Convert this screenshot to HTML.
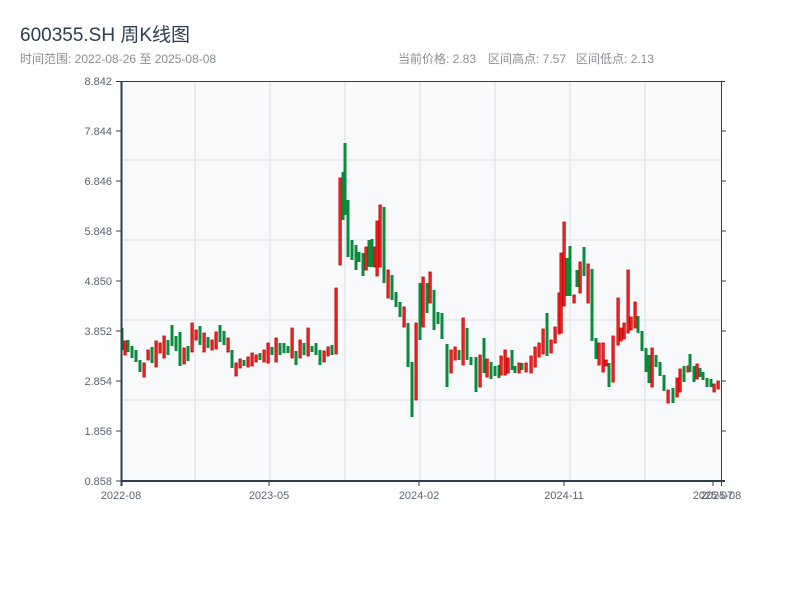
<!DOCTYPE html>
<html><head><meta charset="utf-8">
<style>
body{margin:0;background:#fff;width:800px;height:600px;overflow:hidden;font-family:"Liberation Sans","Noto Sans CJK SC",sans-serif;}
</style></head>
<body>
<svg id="s" width="800" height="600" xmlns="http://www.w3.org/2000/svg" style="position:absolute;left:0;top:0;font-family:'Liberation Sans','Noto Sans CJK SC',sans-serif">
<text x="20" y="41" font-size="19" fill="#2c3e50">600355.SH 周K线图</text>
<text x="20" y="63" font-size="12" fill="#8a8f95">时间范围: 2022-08-26 至 2025-08-08</text>
<text x="398" y="63" font-size="12" fill="#8a8f95">当前价格: 2.83</text>
<text x="488" y="63" font-size="12" fill="#8a8f95">区间高点: 7.57</text>
<text x="576" y="63" font-size="12" fill="#8a8f95">区间低点: 2.13</text>
<rect x="121" y="81" width="600" height="400" fill="#f7f9fb"/>
<g stroke="#e1e4ea" stroke-width="1.3">
<line x1="121" y1="160" x2="721" y2="160"/><line x1="121" y1="240" x2="721" y2="240"/>
<line x1="121" y1="320" x2="721" y2="320"/><line x1="121" y1="400" x2="721" y2="400"/>
<line x1="195" y1="81" x2="195" y2="481"/><line x1="270" y1="81" x2="270" y2="481"/>
<line x1="345" y1="81" x2="345" y2="481"/><line x1="420" y1="81" x2="420" y2="481"/>
<line x1="495" y1="81" x2="495" y2="481"/><line x1="570" y1="81" x2="570" y2="481"/>
<line x1="645" y1="81" x2="645" y2="481"/>
</g>
<g id="c"></g>
<g stroke="#2c3e50">
<line x1="116" y1="81.5" x2="725" y2="81.5" stroke-width="1"/>
<line x1="721.5" y1="81" x2="721.5" y2="486" stroke-width="1"/>
<line x1="121.5" y1="81" x2="121.5" y2="486" stroke-width="2"/>
<line x1="121" y1="481" x2="725" y2="481" stroke-width="2"/>
<g stroke-width="1">
<line x1="116" y1="131" x2="121" y2="131"/><line x1="116" y1="181" x2="121" y2="181"/><line x1="116" y1="231" x2="121" y2="231"/><line x1="116" y1="281" x2="121" y2="281"/><line x1="116" y1="331" x2="121" y2="331"/><line x1="116" y1="381" x2="121" y2="381"/><line x1="116" y1="431" x2="121" y2="431"/><line x1="116" y1="481" x2="121" y2="481"/>
<line x1="721" y1="131" x2="726" y2="131"/><line x1="721" y1="181" x2="726" y2="181"/><line x1="721" y1="231" x2="726" y2="231"/><line x1="721" y1="281" x2="726" y2="281"/><line x1="721" y1="331" x2="726" y2="331"/><line x1="721" y1="381" x2="726" y2="381"/><line x1="721" y1="431" x2="726" y2="431"/>
<line x1="269" y1="481" x2="269" y2="486"/><line x1="419" y1="481" x2="419" y2="486"/><line x1="564" y1="481" x2="564" y2="486"/><line x1="713" y1="481" x2="713" y2="486"/>
</g></g>
<g font-size="11" fill="#5a6370" text-anchor="end">
<text x="112" y="85">8.842</text><text x="112" y="135">7.844</text><text x="112" y="185">6.846</text><text x="112" y="235">5.848</text><text x="112" y="285">4.850</text><text x="112" y="335">3.852</text><text x="112" y="385">2.854</text><text x="112" y="435">1.856</text><text x="112" y="485">0.858</text>
</g>
<g font-size="11" fill="#5a6370" text-anchor="middle">
<text x="121" y="499">2022-08</text><text x="269" y="499">2023-05</text><text x="419" y="499">2024-02</text><text x="564" y="499">2024-11</text><text x="713" y="499">2025-07</text><text x="721" y="499">2025-08</text>
</g>
</svg>
<script>
var d=[[122,328,350,'g'],[125,341,355,'r'],[128,340,352,'g'],[132,346,358,'g'],[136,350,362,'g'],[140,360,372,'g'],[144,363,377,'r'],[148,350,360,'r'],[152,347,363,'g'],[156,341,367,'r'],[160,343,353,'r'],[164,336,358,'r'],[168,340,355,'g'],[172,325,346,'g'],[176,336,351,'g'],[180,332,366,'g'],[184,348,364,'r'],[188,346,361,'g'],[192,323,352,'r'],[196,330,340,'r'],[200,326,345,'g'],[204,333,352,'r'],[208,337,348,'g'],[212,340,350,'r'],[216,332,349,'r'],[220,325,342,'g'],[224,331,345,'g'],[228,338,352,'r'],[232,350,368,'g'],[236,363,376,'r'],[240,359,368,'r'],[244,360,366,'g'],[248,357,367,'r'],[252,353,366,'r'],[256,355,362,'r'],[260,353,360,'g'],[264,350,362,'r'],[268,343,363,'r'],[272,347,355,'g'],[276,338,362,'r'],[280,343,355,'g'],[284,343,353,'g'],[288,346,353,'g'],[292,328,358,'r'],[296,351,365,'g'],[300,340,358,'r'],[304,343,355,'g'],[308,328,356,'r'],[312,346,352,'g'],[316,343,355,'g'],[320,350,365,'g'],[324,351,362,'r'],[328,347,356,'r'],[332,345,355,'g'],[336,288,354,'r'],[340,178,265,'r'],[343,172,220,'g'],[345,143,215,'g'],[348,200,257,'g'],[352,240,260,'g'],[356,245,270,'g'],[359,252,262,'g'],[363,253,276,'g'],[366,247,270,'r'],[369,240,267,'g'],[372,239,267,'g'],[375,247,267,'r'],[377,221,276,'r'],[380,205,267,'r'],[384,207,283,'g'],[388,270,298,'r'],[392,275,300,'g'],[396,292,307,'g'],[400,302,317,'g'],[404,307,327,'r'],[408,323,367,'g'],[412,362,417,'g'],[416,323,400,'r'],[420,283,340,'g'],[423,277,327,'r'],[427,283,313,'g'],[430,272,303,'r'],[434,290,330,'g'],[438,312,324,'g'],[442,313,339,'g'],[447,344,387,'g'],[451,350,373,'r'],[455,347,360,'r'],[459,350,360,'g'],[463,318,365,'r'],[467,328,360,'g'],[471,357,365,'g'],[476,357,392,'g'],[480,355,387,'r'],[484,338,373,'g'],[487,359,377,'r'],[491,362,379,'g'],[495,366,376,'g'],[499,365,378,'g'],[501,356,375,'r'],[505,350,375,'r'],[508,358,373,'r'],[512,350,370,'g'],[515,366,373,'g'],[519,363,373,'r'],[522,363,370,'g'],[526,363,372,'r'],[531,356,373,'r'],[535,347,367,'r'],[539,343,357,'r'],[543,329,354,'r'],[547,313,356,'g'],[551,340,353,'r'],[555,327,343,'r'],[559,293,334,'r'],[561,253,333,'r'],[564,222,306,'r'],[567,258,296,'g'],[570,246,296,'g'],[574,295,303,'r'],[577,270,287,'g'],[580,262,293,'r'],[584,247,276,'g'],[588,264,303,'r'],[592,269,341,'g'],[596,338,359,'g'],[599,343,365,'r'],[603,343,372,'r'],[606,360,366,'r'],[609,363,387,'g'],[613,336,382,'r'],[618,298,345,'r'],[621,328,341,'r'],[624,323,339,'r'],[628,270,333,'r'],[631,317,330,'r'],[635,302,328,'r'],[638,316,333,'g'],[642,331,351,'g'],[646,348,372,'g'],[649,355,383,'g'],[652,348,387,'r'],[656,355,367,'g'],[660,362,376,'g'],[664,375,391,'g'],[668,390,403,'r'],[673,388,403,'g'],[677,378,397,'r'],[680,369,392,'r'],[684,366,382,'g'],[688,366,372,'r'],[690,354,372,'g'],[694,366,382,'g'],[697,364,379,'r'],[700,368,377,'g'],[703,372,380,'g'],[707,378,387,'g'],[711,379,387,'g'],[714,384,392,'r'],[718,381,389,'r']];
var h='';d.forEach(function(a){var x=a[0]-1.5,y=a[1],ht=a[2]-a[1];
if(a[3]=='g')h+='<rect x="'+x+'" y="'+y+'" width="3" height="'+ht+'" fill="#0a8a3c"/>';
else h+='<rect x="'+(x+0.4)+'" y="'+y+'" width="2.4" height="'+ht+'" fill="#e82a2a" stroke="#cc0000" stroke-width="0.8"/>';});
document.getElementById('c').innerHTML=h;
</script>
</body></html>
